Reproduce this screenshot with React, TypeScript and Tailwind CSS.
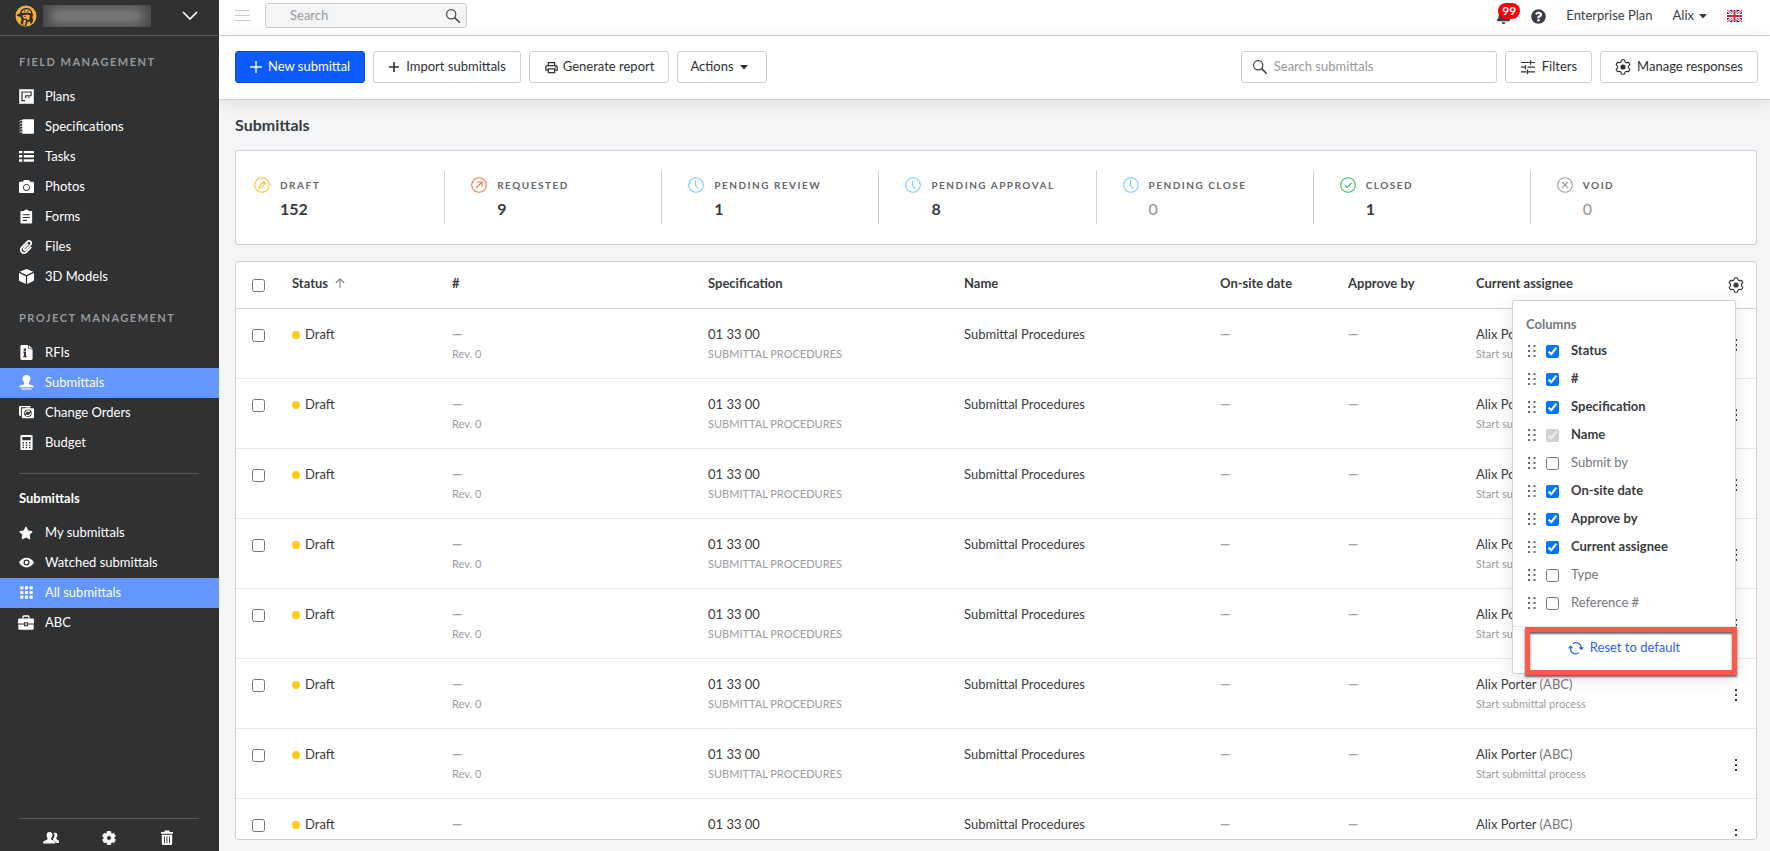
import React from "react";
import { FaBell, FaCamera, FaPaperclip, FaQuestionCircle, FaStar } from "react-icons/fa";
import { MdOutlineLocalPrintshop } from "react-icons/md";

function gearPath(cx: number, cy: number, outer: number, inner: number, tip: number, base: number) {
  const points: string[] = [];
  for (let k = 0; k < 6; k++) {
    const center = -90 + k * 60;
    const corners: [number, number][] = [
      [center - base, inner],
      [center - tip, outer],
      [center + tip, outer],
      [center + base, inner],
    ];
    for (const [deg, r] of corners) {
      const a = (deg * Math.PI) / 180;
      points.push(`${(cx + r * Math.cos(a)).toFixed(2)} ${(cy + r * Math.sin(a)).toFixed(2)}`);
    }
  }
  return `M${points.join("L")}Z`;
}

const OUTLINE_GEAR = gearPath(8, 8, 7.3, 5.4, 9, 24);
const SOLID_GEAR = gearPath(8, 8, 6.7, 5, 15, 22);

type IconProps = { className?: string };

function Glyph({ className = "size-[15px]", children }: { className?: string; children: React.ReactNode }) {
  return (
    <svg viewBox="0 0 16 16" className={className} fill="currentColor" aria-hidden="true">
      {children}
    </svg>
  );
}

const OutlineGear = ({ className }: IconProps) => (
  <Glyph className={className}>
    <path d={OUTLINE_GEAR} fill="none" stroke="currentColor" strokeWidth="1.1" strokeLinejoin="round" />
    <circle cx="8" cy="8" r="2.6" />
  </Glyph>
);

const SearchIcon = ({ className }: IconProps) => (
  <Glyph className={className}>
    <g fill="none" stroke="currentColor" strokeWidth="1.2">
      <circle cx="6.2" cy="6.2" r="4.6" />
      <path d="M9.4 9.4 14.8 14.8" strokeWidth="1.5" />
    </g>
  </Glyph>
);

const PlusLarge = () => (
  <svg viewBox="0 0 12 12" className="size-3" fill="none" stroke="currentColor" strokeWidth="1.4" aria-hidden="true">
    <path d="M6 0v12M0 6h12" />
  </svg>
);

const PlusSmall = () => (
  <svg viewBox="0 0 12 12" className="size-3" fill="none" stroke="currentColor" strokeWidth="1.6" aria-hidden="true">
    <path d="M6 1v10M1 6h10" />
  </svg>
);

const FilterIcon = () => (
  <Glyph className="size-4">
    <path
      d="M1 3.500h8.500M10.500 1.200v4.600M10.500 3.500H15M1 8.200h4M5.500 5.900v4.600M7.500 8.200H15M1 12.800h5.500M7.500 10.500v4.700M7.500 12.800H15"
      fill="none"
      stroke="currentColor"
      strokeWidth="1.2"
    />
  </Glyph>
);

const Caret = () => (
  <svg viewBox="0 0 8 5" className="h-[5px] w-2" fill="currentColor" aria-hidden="true">
    <path d="M0 0h8L4 4.6Z" />
  </svg>
);

const icons = {
  plans: (
    <Glyph>
      <path d="M0 0h16v16H0Z" opacity=".75" />
      <path d="M1 1h14v14H1Z" />
      <path d="M6.500 12.500H3.200V3.200h9.600v4H7.200v2.600M10.500 8v1.800" fill="none" stroke="#303133" strokeWidth="1.300" />
    </Glyph>
  ),
  specifications: (
    <Glyph>
      <rect x="3.500" y=".2" width="12.500" height="15.600" rx="1" />
      <path
        d="M.5 2.500C2 1 4 1.500 4.500 3M.5 5.500C2 4 4 4.500 4.500 6M.5 8.500C2 7 4 7.500 4.500 9M.5 11.500C2 10 4 10.500 4.500 12M.5 14.500C2 13 4 13.500 4.500 15"
        fill="none"
        stroke="currentColor"
      />
    </Glyph>
  ),
  tasks: (
    <Glyph>
      <path d="M0 2h3.500v2.500H0ZM5 2h11v2.500H5ZM0 6.500h3.500V9H0ZM5 6.500h11V9H5ZM0 11h3.500v2.500H0ZM5 11h11v2.500H5Z" />
    </Glyph>
  ),
  photos: <FaCamera className="size-[15px]" />,
  forms: (
    <Glyph>
      <path
        fillRule="evenodd"
        d="M2.500 2.200h2.200L6 1.200C6.500.2 9 .2 9.500 1.200l1.300 1h2.200c.6 0 1 .4 1 1v11.300c0 .6-.4 1-1 1H2.500c-.6 0-1-.4-1-1V3.200c0-.6.4-1 1-1ZM4 5.500v1.200h7.500V5.500Zm0 3v1.200h7.500V8.500Zm0 3v1.200h4.500v-1.200Z"
      />
    </Glyph>
  ),
  files: <FaPaperclip className="size-3.5" />,
  models: (
    <Glyph>
      <path d="M8 0l7.300 3L8 6.300.7 3ZM0 4.300l7.300 3.400V16L0 12.600ZM16 4.300 8.700 7.700V16L16 12.600Z" />
    </Glyph>
  ),
  rfis: (
    <Glyph>
      <path
        fillRule="evenodd"
        d="M3 0h6.500l.5 4 4.500.8V14.500c0 .9-.6 1.500-1.500 1.500H3c-.9 0-1.500-.6-1.500-1.500v-13C1.500.6 2.100 0 3 0Zm2 3.800v2.200h2.500V3.800ZM4.500 7v1.200h.8v3.600h-.8V13h3.700v-1.200h-.8V7Z"
      />
      <path d="M10.500.3v3.200l4 .5Z" />
    </Glyph>
  ),
  stamp: (
    <Glyph>
      <path d="M8 0c2.500 0 4.300 1.700 4.300 4 0 2.400-2 3.500-2 5.200 0 1.400 5.500.6 5.500 3.800H.2C.2 9.800 5.700 10.600 5.700 9.200 5.700 7.500 3.700 6.400 3.700 4 3.700 1.700 5.500 0 8 0Z" />
      <path d="M2.500 14.300h11v1.200h-11Z" />
    </Glyph>
  ),
  changeOrders: (
    <Glyph>
      <path d="M0 2.500C0 1.700.6 1 1.500 1H12l1 1.500H2v9.200C.8 11.500 0 11 0 10Z" />
      <path
        fillRule="evenodd"
        d="M4 3.500h3l1-.8h3l1 .8h3c.6 0 1 .4 1 1V13c0 .6-.4 1-1 1H4c-.6 0-1-.4-1-1V4.500c0-.6.4-1 1-1Zm5.500 1.200a4 4 0 1 0 0 8 4 4 0 0 0 0-8Z"
      />
      <path d="M6.800 9a2.700 2.700 0 0 1 4.200-2.300M12.200 8.500a2.700 2.700 0 0 1-4.200 2.400" fill="none" stroke="currentColor" strokeWidth="1.200" />
      <path d="m10.300 5 1.600 2.100-2.300.5ZM8.800 9.900v2.500l-1.900-1.500Z" />
    </Glyph>
  ),
  budget: (
    <Glyph>
      <path
        fillRule="evenodd"
        d="M2.500 0h11c.6 0 1 .4 1 1v14c0 .6-.4 1-1 1h-11c-.6 0-1-.4-1-1V1c0-.6.4-1 1-1ZM3.500 2v3.500h9V2ZM3.700 7.500v1.600h1.600V7.500Zm3.500 0v1.600h1.600V7.500Zm3.500 0v1.600h1.600V7.500ZM3.700 10v1.500h1.600V10Zm3.500 0v1.500h1.600V10Zm3.500 0v1.500h1.600V10ZM3.700 12.500V14h1.600v-1.500Zm3.500 0V14h1.600v-1.500Zm3.500 0V14h1.600v-1.500Z"
      />
    </Glyph>
  ),
  star: <FaStar className="size-3.5" />,
  eye: (
    <Glyph>
      <path
        fillRule="evenodd"
        d="M0 8c1.800-3.300 4.700-5.200 8-5.200S14.200 4.700 16 8c-1.800 3.300-4.700 5.200-8 5.200S1.800 11.300 0 8Zm8-3.200a3.200 3.200 0 1 0 0 6.400 3.200 3.200 0 0 0 0-6.400Z"
      />
      <circle cx="8" cy="8" r="1.800" />
    </Glyph>
  ),
  grid: (
    <Glyph>
      {[3, 8, 13].flatMap((y) => [3, 8, 13].map((x) => <rect key={`${x}-${y}`} x={x - 1.7} y={y - 1.7} width="3.4" height="3.4" rx="1" />))}
    </Glyph>
  ),
  briefcase: (
    <Glyph className="size-4">
      <path d="M5 3.500V2c0-.6.400-1 1-1h4c.6 0 1 .4 1 1v1.500" fill="none" stroke="currentColor" strokeWidth="1.300" />
      <path d="M1.500 3.500h13c.8 0 1.500.7 1.500 1.500v3.500H10V7.200H6v1.300H0V5c0-.8.700-1.500 1.500-1.500ZM.3 9.500H6v1.700h4V9.500h5.700V13.500c0 .8-.5 1.300-1.200 1.300h-13c-.7 0-1.200-.5-1.200-1.300Z" />
      <rect x="7.200" y="8.200" width="1.600" height="2" />
    </Glyph>
  ),
};

type NavItem = { label: string; icon: React.ReactNode; active?: boolean };

const fieldItems: NavItem[] = [
  { label: "Plans", icon: icons.plans },
  { label: "Specifications", icon: icons.specifications },
  { label: "Tasks", icon: icons.tasks },
  { label: "Photos", icon: icons.photos },
  { label: "Forms", icon: icons.forms },
  { label: "Files", icon: icons.files },
  { label: "3D Models", icon: icons.models },
];

const projectItems: NavItem[] = [
  { label: "RFIs", icon: icons.rfis },
  { label: "Submittals", icon: icons.stamp, active: true },
  { label: "Change Orders", icon: icons.changeOrders },
  { label: "Budget", icon: icons.budget },
];

const submittalItems: NavItem[] = [
  { label: "My submittals", icon: icons.star },
  { label: "Watched submittals", icon: icons.eye },
  { label: "All submittals", icon: icons.grid, active: true },
  { label: "ABC", icon: icons.briefcase },
];

function NavList({ items }: { items: NavItem[] }) {
  return (
    <ul>
      {items.map((item) => (
        <li key={item.label}>
          <a
            href="#"
            className={`flex h-[30px] items-center gap-[11px] pb-px pl-[18px] text-white ${item.active ? "bg-[#6496ff]" : ""}`}
          >
            <span className="flex w-4 justify-center">{item.icon}</span>
            {item.label}
          </a>
        </li>
      ))}
    </ul>
  );
}

function Logo() {
  return (
    <svg viewBox="0 0 22 22" className="size-[22px] shrink-0" aria-hidden="true">
      <circle cx="11" cy="11" r="10.500" fill="#f5ae3a" />
      <path
        d="M2 9.600 5 8.300C5.500 5 8 3 11.500 3c3.400 0 5.800 2.200 6 5.500l1 1.500-1 .6v3.200l1 .8-1.500 3.400-1.500 1.200-.5-3-2.500 1-1 3.500H8.500l-3-2.500 1-3.500-.8-2.700L2 10.800Z"
        fill="#303133"
      />
      <path d="M6.500 8C7 5.500 9 4.200 11.500 4.200S15.800 5.700 16.200 8.200c-3-.9-6.500-1-9.700-.2Z" fill="#f5ae3a" />
      <path d="M7.500 10.200c2.500-.6 5-.7 7.200 0L14.500 14l-1.800 1.200-1.200-1.800-2.700.4Z" fill="#f5ae3a" />
      <path d="M9 14.800l2.300.4-1.500 5.300-2-.8Z" fill="#f5ae3a" />
      <path d="M9.700 4.500v2.500M13 4.500v2.500" stroke="#303133" strokeWidth=".7" />
      <path d="M9 11.300h2" stroke="#303133" strokeWidth=".8" />
    </svg>
  );
}

function Sidebar() {
  const sectionHead = "px-[19px] pt-4 pb-2.5 text-[11px] leading-5 font-bold tracking-[1.5px] text-[#97989a]";
  return (
    <aside className="flex w-[219px] shrink-0 flex-col bg-[#303133] text-white">
      <div className="flex h-9 shrink-0 items-center border-b border-[#58595b] pr-[21px] pb-1 pl-[15px]">
        <Logo />
        <div className="ml-1.5 h-[22px] w-27 overflow-hidden bg-[#4b4b4b]">
          <div className="mx-2 my-1 h-[14px] bg-[#838484] blur-[6px]" />
        </div>
        <button type="button" aria-label="Switch project" className="ml-auto">
          <svg viewBox="0 0 16 9" className="h-[9px] w-4" fill="none" stroke="currentColor" strokeWidth="1.7" aria-hidden="true">
            <path d="M1 1l7 7 7-7" />
          </svg>
        </button>
      </div>
      <nav className="flex-1">
        <h2 className={sectionHead}>FIELD MANAGEMENT</h2>
        <NavList items={fieldItems} />
        <h2 className={sectionHead}>PROJECT MANAGEMENT</h2>
        <NavList items={projectItems} />
        <hr className="mt-[15px] mr-5 ml-[19px] border-[#58595b]" />
        <h2 className="px-[19px] pt-3.5 pb-2.5 leading-5 font-bold">Submittals</h2>
        <NavList items={submittalItems} />
      </nav>
      <div className="mr-5 ml-[19px] flex h-[33px] shrink-0 items-center justify-center gap-[42px] border-t border-[#58595b] pt-[5px]">
        <button type="button" aria-label="People">
          <Glyph className="size-4">
            <path d="M10.500 3.200c.4-.4.900-.5 1.400-.5 1.700 0 2.700 1.200 2.400 3-.1.900-.5 1.500-1 2.100v1.300l2.700 1.600V13h-3.500l-.3-1.500-2.200-1.300V9c.8-1 1.400-1.900 1.500-3 .1-1.100-.2-2.100-1-2.800Z" />
            <path d="M6.500 2C8.500 2 9.600 3.300 9.400 5.200 9.300 6.400 8.800 7.200 8.100 8v1.500l3.400 1.700c.4.300.6.800.6 2.300H0c0-1.500.2-2 .6-2.300l3.800-1.700V8C4 7.200 3.700 6.400 3.600 5.200 3.400 3.300 4.500 2 6.500 2Z" />
          </Glyph>
        </button>
        <button type="button" aria-label="Settings">
          <Glyph className="size-4">
            <path
              fillRule="evenodd"
              d={`${SOLID_GEAR}M8 5.600a2.400 2.400 0 1 0 0 4.800 2.400 2.400 0 0 0 0-4.800Z`}
              stroke="currentColor"
              strokeWidth=".8"
              strokeLinejoin="round"
            />
          </Glyph>
        </button>
        <button type="button" aria-label="Trash">
          <Glyph className="size-4">
            <path
              fillRule="evenodd"
              d="M5.500.5h5V2H14v1.800H2V2h3.500ZM2.800 4.800h10.400v8.700c0 .9-.6 1.500-1.500 1.500H4.300c-.9 0-1.500-.6-1.500-1.500ZM5 6.500v6.700h.9V6.500Zm2.500 0v6.700h.9V6.500Zm2.500 0v6.700h.9V6.500Z"
            />
          </Glyph>
        </button>
      </div>
    </aside>
  );
}

function Flag() {
  return (
    <svg viewBox="0 0 15 12" className="h-3 w-[15px]" aria-label="English" role="img">
      <rect width="15" height="12" fill="#24348a" />
      <path d="M0 0l15 12M15 0 0 12" stroke="#fff" strokeWidth="2.600" />
      <path d="M0 0l15 12M15 0 0 12" stroke="#d8303f" strokeWidth="1" />
      <path d="M7.500 0v12M0 6h15" stroke="#fff" strokeWidth="4" />
      <path d="M7.500 0v12M0 6h15" stroke="#d8202f" strokeWidth="2" />
    </svg>
  );
}

function TopBar() {
  return (
    <header className="flex h-9 shrink-0 items-start border-b border-[#cbcbcb] bg-white pr-7 pl-4 text-[#3a3d45]">
      <button type="button" aria-label="Toggle menu" className="mt-2.5 flex w-[15px] flex-col gap-1 text-[#ccc]">
        <span className="h-px bg-current" />
        <span className="h-px bg-current" />
        <span className="h-px bg-current" />
      </button>
      <div className="mt-[3px] ml-[15px] flex h-[25px] w-[202px] items-center rounded-[3px] border border-[#c9c9c9] bg-[#f4f5f7] pr-[5px] pl-6">
        <input aria-label="Search" placeholder="Search" className="w-full min-w-0 bg-transparent outline-none placeholder:text-[#999a9c]" />
        <SearchIcon className="size-4 shrink-0 text-[#444]" />
      </div>
      <div className="ml-auto flex h-8 items-center">
        <button type="button" aria-label="Notifications" className="relative mr-5">
          <FaBell className="size-[15px]" />
          <span className="absolute -top-1.5 left-0.5 rounded-full bg-[#fb0007] px-1 text-[12px] leading-4 font-bold text-white">99</span>
        </button>
        <button type="button" aria-label="Help" className="mr-5">
          <FaQuestionCircle className="size-[15px]" />
        </button>
        <a href="#" className="mr-5">Enterprise Plan</a>
        <button type="button" className="mr-5 flex items-center gap-[5px]">
          Alix <Caret />
        </button>
        <Flag />
      </div>
    </header>
  );
}

const outlined = "flex h-8 items-center rounded-[3px] border border-[#cfcfd4] bg-white whitespace-nowrap text-[#2f3032]";

function Toolbar() {
  return (
    <div className="relative flex h-16 shrink-0 items-start gap-2 border-b border-[#cfcfd6] bg-white pt-[15px] pr-3 pl-4 shadow-[0_4px_14px_rgba(0,0,0,0.09)]">
      <button type="button" className="flex h-8 items-center gap-1.5 rounded-[3px] border border-[#0a4fdc] bg-[#0d5bff] px-3.5 whitespace-nowrap text-white">
        <PlusLarge /> New submittal
      </button>
      <button type="button" className={`${outlined} gap-1.5 px-3.5`}>
        <PlusSmall /> Import submittals
      </button>
      <button type="button" className={`${outlined} gap-1 px-3.5`}>
        <MdOutlineLocalPrintshop className="size-[15px]" /> Generate report
      </button>
      <button type="button" className={`${outlined} gap-1.5 pr-[18px] pl-3`}>
        Actions <Caret />
      </button>
      <div className="ml-auto flex h-8 w-64 items-center gap-1.5 rounded-[3px] border border-[#cfcfd4] bg-white px-2.5">
        <SearchIcon className="size-4 shrink-0 text-[#3a3b3d]" />
        <input
          aria-label="Search submittals"
          placeholder="Search submittals"
          className="w-full min-w-0 bg-transparent outline-none placeholder:text-[#98999b]"
        />
      </div>
      <button type="button" className={`${outlined} gap-1.5 px-3.5`}>
        <FilterIcon /> Filters
      </button>
      <button type="button" className={`${outlined} gap-1.5 px-3.5`}>
        <OutlineGear className="size-4" /> Manage responses
      </button>
    </div>
  );
}

const clock = <path d="M7.500 3.500V8.500L10 11.500" />;

const stats = [
  { label: "DRAFT", value: 152, color: "text-[#ffc21f]", mark: <path d="M5 11l.5-2.300 4.300-4.200 1.700 1.700-4.200 4.300Zm4-5.600 1.600 1.700" /> },
  { label: "REQUESTED", value: 9, color: "text-[#f07a3c]", mark: <path d="M5 11l5.700-5.700M6.500 5h4.500v4.500" /> },
  { label: "PENDING REVIEW", value: 1, color: "text-[#78cdfa]", mark: clock },
  { label: "PENDING APPROVAL", value: 8, color: "text-[#78cdfa]", mark: clock },
  { label: "PENDING CLOSE", value: 0, color: "text-[#78cdfa]", mark: clock },
  { label: "CLOSED", value: 1, color: "text-[#2fc25d]", mark: <path d="M4.700 8.200l2.300 2.300 4.500-4.500" /> },
  { label: "VOID", value: 0, color: "text-[#9c9da0]", mark: <path d="M5 5l6 6M11 5l-6 6" /> },
];

function Stats() {
  return (
    <section className="grid h-[95px] shrink-0 grid-cols-7 items-center rounded-[3px] border border-[#cfcfd6] bg-white">
      {stats.map((s) => (
        <div
          key={s.label}
          className="-ml-[9px] flex h-[53px] gap-2.5 border-l border-[#cfcfd6] pt-1.5 pl-[26px] first:border-transparent"
        >
          <svg viewBox="0 0 16 16" className={`size-4 shrink-0 ${s.color}`} fill="none" stroke="currentColor" strokeWidth="1.1" aria-hidden="true">
            <circle cx="8" cy="8" r="7.300" />
            {s.mark}
          </svg>
          <div>
            <div className="text-[10px] leading-4 font-bold tracking-[1.5px] whitespace-nowrap text-[#66676b]">{s.label}</div>
            <div className={`mt-1 text-base leading-6 ${s.value ? "font-bold text-[#3a3b3d]" : "font-medium text-[#98999d]"}`}>{s.value}</div>
          </div>
        </div>
      ))}
    </section>
  );
}

const rows = [1, 2, 3, 4, 5, 6, 7, 8];

function SubmittalTable() {
  const head = "px-4 text-left font-bold";
  const cell = "px-4 pt-[15px] text-left";
  const sub = "text-[11px] leading-5 text-[#9b9c9f]";
  const dash = <span className="font-bold text-[#a3a4a6]">—</span>;
  return (
    <table className="w-full table-fixed border-separate border-spacing-0 leading-5 text-[#3a3b3d]">
      <colgroup>
        <col className="w-10" />
        <col className="w-40" />
        <col className="w-64" />
        <col className="w-64" />
        <col className="w-64" />
        <col className="w-32" />
        <col className="w-32" />
        <col className="w-64" />
        <col className="w-10" />
      </colgroup>
      <thead>
        <tr className="h-[47px] *:border-b *:border-[#cfcfd6] *:pb-1">
          <th className="pl-4 text-left">
            <input type="checkbox" aria-label="Select all" className="mt-1 block size-[13px]" />
          </th>
          <th className={head}>
            <span className="flex items-center gap-[7px]">
              Status
              <svg viewBox="0 0 10 10" className="size-2.5 text-[#8a8b8f]" fill="none" stroke="currentColor" strokeWidth="1.2" aria-hidden="true">
                <path d="M5 10V.8M.8 5 5 .8 9.200 5" />
              </svg>
            </span>
          </th>
          <th className={head}>#</th>
          <th className={head}>Specification</th>
          <th className={head}>Name</th>
          <th className={head}>On-site date</th>
          <th className={head}>Approve by</th>
          <th className={head}>Current assignee</th>
          <th className="pl-3 text-left">
            <button type="button" aria-label="Column settings" className="mt-1 block">
              <OutlineGear className="size-4" />
            </button>
          </th>
        </tr>
      </thead>
      <tbody>
        {rows.map((row) => (
          <tr key={row} className="h-[70px] align-top *:border-b *:border-[#e9e9ec]">
            <td className="pt-5 pl-4">
              <input type="checkbox" aria-label={`Select submittal ${row}`} className="block size-[13px]" />
            </td>
            <td className={cell}>
              <span className="flex items-center gap-[5px]">
                <span className="mt-0.5 size-2 rounded-full bg-[#ffca18]" />
                Draft
              </span>
            </td>
            <td className={cell}>
              {dash}
              <div className={sub}>Rev. 0</div>
            </td>
            <td className={cell}>
              01 33 00
              <div className={sub}>SUBMITTAL PROCEDURES</div>
            </td>
            <td className={cell}>Submittal Procedures</td>
            <td className={cell}>{dash}</td>
            <td className={cell}>{dash}</td>
            <td className={cell}>
              Alix Porter <span className="text-[#76777b]">(ABC)</span>
              <div className={sub}>Start submittal process</div>
            </td>
            <td className="pt-[30px]">
              <button type="button" aria-label="Row actions" className="mx-auto flex w-4 flex-col items-center gap-[3px]">
                <span className="size-0.5 bg-[#3a3b3d]" />
                <span className="size-0.5 bg-[#3a3b3d]" />
                <span className="size-0.5 bg-[#3a3b3d]" />
              </button>
            </td>
          </tr>
        ))}
      </tbody>
    </table>
  );
}

const columns = [
  { label: "Status", checked: true },
  { label: "#", checked: true },
  { label: "Specification", checked: true },
  { label: "Name", checked: true, disabled: true },
  { label: "Submit by", checked: false },
  { label: "On-site date", checked: true },
  { label: "Approve by", checked: true },
  { label: "Current assignee", checked: true },
  { label: "Type", checked: false },
  { label: "Reference #", checked: false },
];

function ColumnsMenu() {
  return (
    <div className="absolute top-[39px] right-[21px] w-56 rounded-[3px] border border-[#cfcfd6] bg-white shadow-[0_4px_16px_rgba(0,0,0,0.12)]">
      <fieldset className="pt-[13px] pb-[9px]">
        <legend className="float-left mb-[3px] w-full px-[13px] leading-5 font-bold text-[#76777b]">Columns</legend>
        {columns.map((c) => (
          <label key={c.label} className="clear-both flex h-7 w-full items-center pl-[15px]">
            <svg viewBox="0 0 8 12" className="h-3 w-2 text-[#66676b]" fill="currentColor" aria-hidden="true">
              <path d="M0 0h2v2H0ZM5.500 0h2v2h-2ZM0 5h2v2H0ZM5.500 5h2v2h-2ZM0 10h2v2H0ZM5.500 10h2v2h-2Z" />
            </svg>
            <input type="checkbox" defaultChecked={c.checked} disabled={c.disabled} className="ml-2.5 size-[13px]" />
            <span className={`ml-3 ${c.checked ? "font-bold text-[#3a3b3d]" : "text-[#76777b]"}`}>{c.label}</span>
          </label>
        ))}
      </fieldset>
      <div className="flex h-[47px] justify-center border-t border-[#e9e9ec] pt-[11px]">
        <button type="button" className="flex h-5 items-center gap-1.5 text-[#2f62f5]">
          <svg viewBox="0 0 16 14" className="h-3.5 w-4" fill="none" stroke="currentColor" strokeWidth="1.200" aria-hidden="true">
            <path d="M5 2.700A5.200 5.200 0 0 1 13.200 7M2.600 6.500A5.200 5.200 0 0 0 11 11.600" />
            <path d="M0 7.200 2.600 4.200 5.200 7.200ZM10.600 6.300l2.700 3 2.600-3Z" fill="currentColor" stroke="none" />
          </svg>
          Reset to default
        </button>
      </div>
      <div className="pointer-events-none absolute -right-0.5 -bottom-0.5 left-3 h-12 border-5 border-[#ff594d] shadow-[0_2px_2px_rgba(40,40,40,0.7),inset_0_2px_2px_rgba(40,40,40,0.7)]" />
    </div>
  );
}

export default function App() {
  return (
    <div className="flex h-screen overflow-hidden bg-[#f4f5f7] font-['Lato',sans-serif] text-[13px]">
      <Sidebar />
      <div className="flex min-w-0 flex-1 flex-col">
        <TopBar />
        <Toolbar />
        <main className="flex min-h-0 flex-1 flex-col pr-[13px] pb-[11px] pl-4">
          <h1 className="py-[13px] text-base leading-6 font-bold text-[#3a3b3d]">Submittals</h1>
          <Stats />
          <div className="relative mt-4 min-h-0 flex-1">
            <div className="h-full overflow-hidden rounded-[3px] border border-[#cfcfd6] bg-white">
              <SubmittalTable />
            </div>
            <ColumnsMenu />
          </div>
        </main>
      </div>
    </div>
  );
}
